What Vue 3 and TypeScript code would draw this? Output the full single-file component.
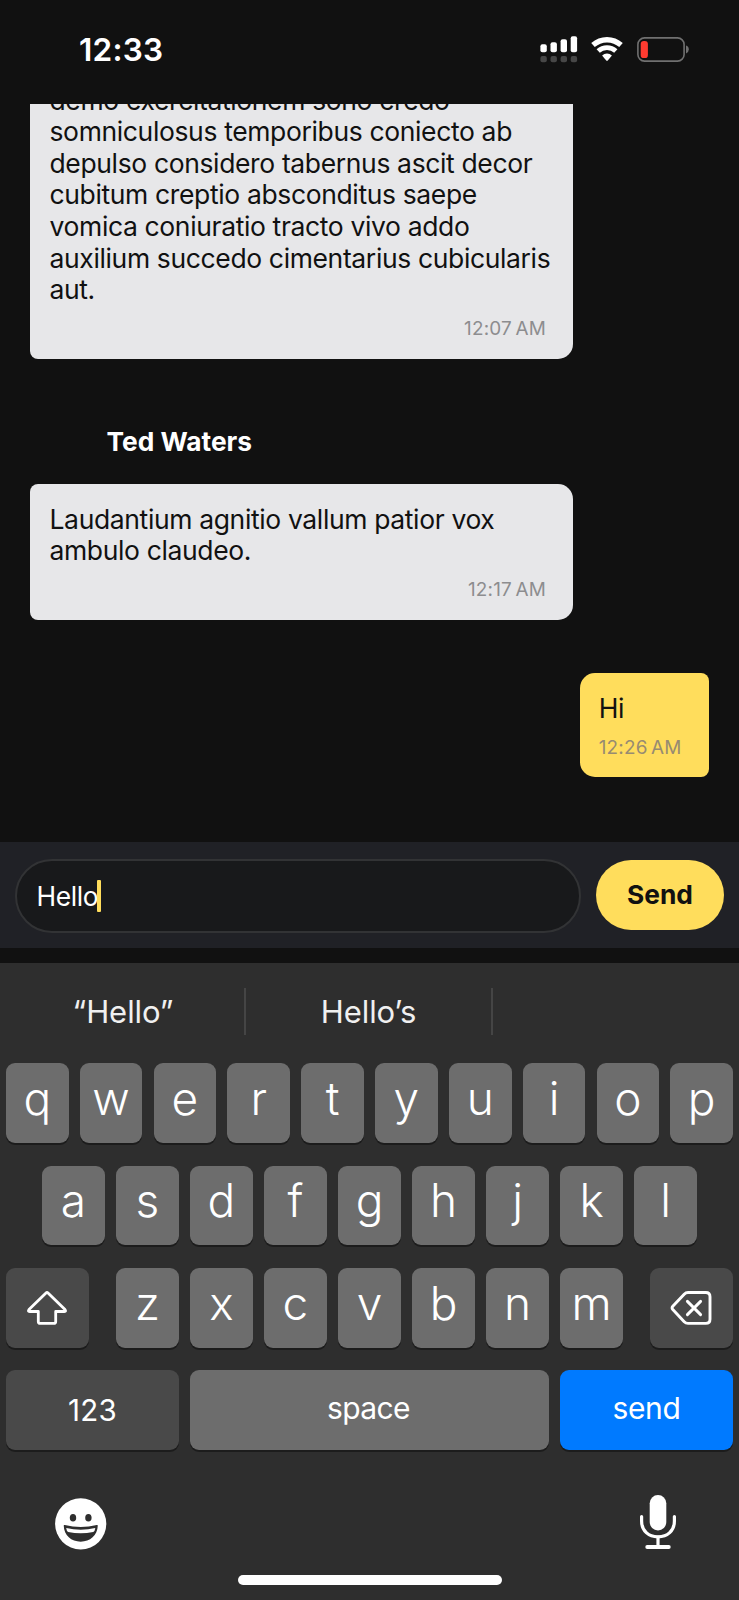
<script setup lang="ts">
import { ref } from 'vue'

interface Message {
  author?: string
  own: boolean
  lines: string[]
  time: string
}

const messages: Message[] = [
  {
    own: false,
    lines: [
      'demo exercitationem sono credo',
      'somniculosus temporibus coniecto ab',
      'depulso considero tabernus ascit decor',
      'cubitum creptio absconditus saepe',
      'vomica coniuratio tracto vivo addo',
      'auxilium succedo cimentarius cubicularis',
      'aut.',
    ],
    time: '12:07 AM',
  },
  {
    author: 'Ted Waters',
    own: false,
    lines: ['Laudantium agnitio vallum patior vox', 'ambulo claudeo.'],
    time: '12:17 AM',
  },
  { own: true, lines: ['Hi'], time: '12:26 AM' },
]

const draft = ref('Hello')
const suggestions = ['“Hello”', 'Hello’s', '']
const topRow = [...'qwertyuiop']
const homeRow = [...'asdfghjkl']
const bottomRow = [...'zxcvbnm']
const signalBars = [8, 10, 13, 16]
</script>

<template>
  <div class="phone">
    <header class="status">
      <span class="clock">12:33</span>
      <div class="indicators">
        <svg class="signal" width="38" height="27" viewBox="0 0 38 27">
          <g v-for="(h, i) in signalBars" :key="i">
            <rect :x="0.4 + i * 10.1" :y="16.2 - h" width="6.4" :height="h" rx="2" fill="#fff" />
            <rect :x="0.4 + i * 10.1" y="20" width="6.4" height="6.2" rx="2" fill="#474747" />
          </g>
        </svg>
        <svg class="wifi" width="32" height="25" viewBox="0 0 32 25">
          <path d="M2 8.1A21 21 0 0 1 30 8.1" fill="none" stroke="#fff" stroke-width="5.3" />
          <path d="M7.2 14A13.1 13.1 0 0 1 24.8 14" fill="none" stroke="#fff" stroke-width="4.8" />
          <path d="M11.1 18.5A7.2 7.2 0 0 1 20.9 18.5L16.8 23.4Q16 24.2 15.2 23.4Z" fill="#fff" />
        </svg>
        <svg class="battery" width="53" height="25" viewBox="0 0 53 25">
          <rect x="0.9" y="0.9" width="46.2" height="23.2" rx="6.6" fill="none" stroke="#707070" stroke-width="1.6" />
          <path d="M49 8.6Q51.8 9.6 51.8 12.5T49 16.4Z" fill="#707070" />
          <rect x="3.7" y="3.9" width="7.2" height="17.2" rx="3.2" fill="#ff3b30" />
        </svg>
      </div>
    </header>

    <main class="chat">
      <section v-for="(m, i) in messages" :key="i" class="message" :class="{ own: m.own, first: i === 0 }">
        <h2 v-if="m.author" class="author">{{ m.author }}</h2>
        <div class="bubble">
          <p v-for="line in m.lines" :key="line" class="line">{{ line }}</p>
          <time class="time">{{ m.time }}</time>
        </div>
      </section>
    </main>

    <div class="composer">
      <div class="field"><span class="draft">{{ draft }}</span><span class="caret"></span></div>
      <button class="submit" type="button">Send</button>
    </div>

    <section class="keyboard">
      <div class="suggestions">
        <span v-for="s in suggestions" :key="s" class="suggestion">{{ s }}</span>
      </div>
      <div class="rows">
        <div class="row">
          <span v-for="k in topRow" :key="k" class="key letter">{{ k }}</span>
        </div>
        <div class="row inset">
          <span v-for="k in homeRow" :key="k" class="key letter">{{ k }}</span>
        </div>
        <div class="row spread">
          <span class="key dark modifier">
            <svg width="42" height="36" viewBox="0 0 42 36" fill="none" stroke="#fff" stroke-width="2.8" stroke-linejoin="round">
              <path d="M20 3Q21 2 22 3L39 19.6Q40.4 21.5 38.4 21.5H29.7V31.4Q29.7 33.4 27.7 33.4H14.3Q12.3 33.4 12.3 31.4V21.5H3.6Q1.6 21.5 3 19.6Z" />
            </svg>
          </span>
          <div class="letters">
            <span v-for="k in bottomRow" :key="k" class="key letter">{{ k }}</span>
          </div>
          <span class="key dark modifier">
            <svg width="42" height="36" viewBox="0 0 42 36" fill="none" stroke="#fff" stroke-width="2.9" stroke-linejoin="round" stroke-linecap="round">
              <path d="M2.8 16.3L14.2 4.2Q15.8 2.5 18 2.5H35.8Q40 2.5 40 6.7V29.2Q40 33.4 35.8 33.4H18Q15.8 33.4 14.2 31.7L2.8 19.5Q1.4 17.9 2.8 16.3Z" />
              <path d="M17.4 11.4L30.6 24.6M30.6 11.4L17.4 24.6" />
            </svg>
          </span>
        </div>
        <div class="row">
          <span class="key dark wide digits">123</span>
          <span class="key space">space</span>
          <span class="key blue wide">send</span>
        </div>
      </div>
      <div class="tools">
        <svg class="emoji" width="52" height="52" viewBox="0 0 52 52">
          <circle cx="25.7" cy="25.8" r="25.6" fill="#fff" />
          <ellipse cx="18" cy="19.8" rx="3.2" ry="3.8" fill="#2e2e2e" />
          <ellipse cx="33.4" cy="19.8" rx="3.2" ry="3.8" fill="#2e2e2e" />
          <path d="M8.7 27.6Q8.7 26.8 9.8 27Q25.7 31.2 41.7 27Q42.8 26.8 42.8 27.6C42.5 37.6 35 43.7 25.7 43.7S9 37.6 8.7 27.6Z" fill="#2e2e2e" />
          <path d="M11.2 30Q25.7 33.4 40.3 30Q40 33 38.2 34Q25.7 36.6 13.2 34Q11.5 33 11.2 30Z" fill="#fff" />
        </svg>
        <svg class="mic" width="36" height="54" viewBox="0 0 36 54" fill="none" stroke="#fff" stroke-linecap="round">
          <rect x="9.7" y="0" width="16.6" height="35.4" rx="8.3" fill="#fff" stroke="none" />
          <path d="M1.6 21.6V26C1.6 36 8.6 41.8 18 41.8S34.4 36 34.4 26V21.6" stroke-width="3.2" />
          <path d="M18 42V51" stroke-width="3.2" />
          <path d="M7.2 52H28.8" stroke-width="3.8" />
        </svg>
      </div>
      <div class="home"></div>
    </section>
  </div>
</template>

<style>
body {
  margin: 0;
  background: #111;
}
</style>

<style scoped>
.phone {
  display: flex;
  flex-direction: column;
  width: 739px;
  height: 1600px;
  overflow: hidden;
  background: #111;
  color: #fff;
  font-family: Inter, "Liberation Sans", sans-serif;
}
.status {
  display: flex;
  justify-content: space-between;
  flex: none;
  height: 104px;
  box-sizing: border-box;
  padding: 36px 49px 0 79px;
}
.clock {
  height: 27px;
  font-size: 31.6px;
  font-weight: 600;
  line-height: 27px;
  letter-spacing: 0.2px;
}
.indicators {
  display: flex;
  height: 27px;
}
.wifi {
  margin: 1px 0 0 13px;
}
.battery {
  margin: 0.5px 0 0 14px;
}
.chat {
  display: flex;
  flex-direction: column;
  justify-content: flex-end;
  flex: none;
  height: 738px;
  box-sizing: border-box;
  padding: 0 30px 65px 30px;
  overflow: hidden;
}
.message {
  display: flex;
  flex-direction: column;
  align-items: flex-start;
  flex: none;
  margin-top: 66.4px;
}
.message.own {
  align-items: flex-end;
  margin-top: 53px;
}
.message.first {
  margin-top: 0;
}
.author {
  margin: 0 0 26px 76.5px;
  padding-top: 0.6px;
  font-size: 26.3px;
  font-weight: 650;
  line-height: 32px;
}
.bubble {
  display: flex;
  flex-direction: column;
  width: 543px;
  box-sizing: border-box;
  padding: 19.9px 27px 17.4px 19.5px;
  border-radius: 8px 15px 15px 8px;
  background: #e7e7e9;
  color: #111;
}
.own .bubble {
  width: 129.3px;
  padding-left: 19px;
  border-radius: 15px 8px 8px 15px;
  background: #ffdd5c;
}
.line {
  margin: 0;
  font-size: 26.5px;
  line-height: 31.6px;
  letter-spacing: -0.365px;
  white-space: nowrap;
}
.time {
  align-self: flex-end;
  margin-top: 11.5px;
  color: #8d8d8f;
  font-size: 18.9px;
  line-height: 24px;
  letter-spacing: 0.2px;
  word-spacing: -2px;
  white-space: nowrap;
}
.own .time {
  align-self: flex-start;
  color: #978b72;
}
.composer {
  display: flex;
  align-items: center;
  flex: none;
  height: 106px;
  box-sizing: border-box;
  padding: 0 15px;
  gap: 15px;
  background: #202126;
}
.field {
  display: flex;
  align-items: center;
  flex: 1;
  height: 74px;
  margin-top: 2px;
  box-sizing: border-box;
  padding-left: 19.5px;
  border: 2px solid #323335;
  border-radius: 37px;
  background: #18191b;
}
.draft {
  padding-bottom: 1px;
  font-size: 26.4px;
  line-height: 32px;
  letter-spacing: -0.4px;
}
.caret {
  width: 4px;
  height: 32px;
  margin-left: -1.5px;
  border-radius: 1px;
  background: #ffdd5c;
}
.submit {
  width: 128px;
  height: 70px;
  margin: 0;
  padding: 0;
  border: 0;
  border-radius: 35px;
  background: #ffdd5c;
  color: #111;
  font: 650 26.3px/70px Inter, "Liberation Sans", sans-serif;
}
.keyboard {
  display: flex;
  flex-direction: column;
  flex: none;
  height: 637px;
  margin-top: 15px;
  background: #2e2e2e;
}
.suggestions {
  display: grid;
  grid-template-columns: 244px 247px 248px;
  height: 47px;
  padding: 25px 0 28px;
}
.suggestion {
  display: flex;
  align-items: center;
  justify-content: center;
  border-left: 2px solid #454545;
  color: #f0f0f0;
  font-size: 31px;
  letter-spacing: -0.05px;
}
.suggestion:first-child {
  border-left-color: transparent;
}
.rows {
  display: flex;
  flex-direction: column;
  gap: 22.5px;
  margin-top: 0.3px;
  padding: 0 6px;
}
.row {
  display: flex;
  gap: 11.3px;
  height: 79.8px;
}
.row.inset {
  padding: 0 36px;
}
.row.spread {
  justify-content: space-between;
  gap: 0;
}
.letters {
  display: flex;
  gap: 11.3px;
  width: 507px;
}
.key {
  display: flex;
  align-items: center;
  justify-content: center;
  box-sizing: border-box;
  border-radius: 9px;
  background: #6d6d6d;
  box-shadow: 0 2px 0 #1c1c1c;
  font-size: 30px;
}
.letter {
  flex: 1 1 0;
  padding: 0 0 10px 0;
  font-size: 46px;
  font-weight: 300;
}
.dark {
  background: #494949;
}
.modifier {
  width: 83px;
  padding: 0 1px 0 0;
}
.wide {
  width: 173px;
}
.space {
  flex: 1;
  padding: 0 2px 4px 0;
  letter-spacing: -0.6px;
}
.blue {
  padding-bottom: 4px;
  background: #007aff;
  letter-spacing: -0.4px;
}
.digits {
  font-size: 29.5px;
  letter-spacing: 0.3px;
}
.tools {
  display: flex;
  align-items: center;
  justify-content: space-between;
  height: 54px;
  margin-top: 45.4px;
  padding: 0 63px 0 55px;
}
.emoji {
  margin-top: 4px;
}
.home {
  width: 264px;
  height: 10px;
  margin: 26px auto 0;
  border-radius: 5px;
  background: #fff;
}
</style>
